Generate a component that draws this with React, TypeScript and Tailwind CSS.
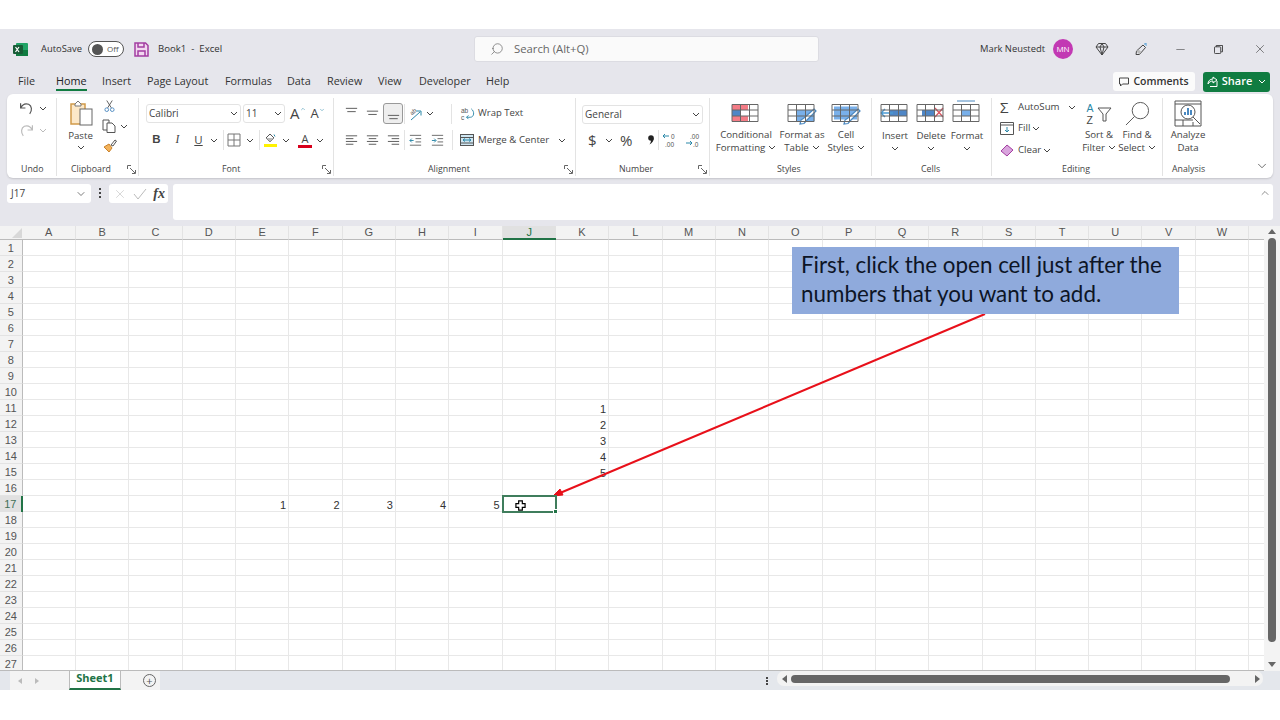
import { ChevronDown, ChevronUp, Minus, Search, X } from 'lucide-react'
import type { ReactNode } from 'react'

const columns = 'A B C D E F G H I J K L M N O P Q R S T U V W'.split(' ')
const rows = Array.from({ length: 27 }, (_, i) => i + 1)

// cell values keyed by column + row
const values: Record<string, string> = {
  K11: '1', K12: '2', K13: '3', K14: '4', K15: '5',
  E17: '1', F17: '2', G17: '3', H17: '4', I17: '5',
}

function Chev({ className = '' }: { className?: string }) {
  return (
    <svg viewBox="0 0 8 5" className={'h-[5px] w-[8px] shrink-0 ' + className} fill="none" stroke="currentColor" strokeWidth="1">
      <path d="M1 1l3 3 3-3" />
    </svg>
  )
}

function Launcher() {
  return (
    <svg viewBox="0 0 9 9" className="h-[9px] w-[9px] text-[#666]" fill="none" stroke="currentColor" strokeWidth="1">
      <path d="M.5 4V.5H4M3 3l5 5M8.500 5v3.500H5" />
    </svg>
  )
}

function Lines({ kind }: { kind: string }) {
  const paths: Record<string, string> = {
    top: 'M2 2.500h12M3.500 6h9',
    middle: 'M2 5.500h12M3.500 9h9',
    bottom: 'M2 10h12M3.500 13.500h9',
    left: 'M2 3h12M2 6h8M2 9h12M2 12h8',
    center: 'M2 3h12M4 6h8M2 9h12M4 12h8',
    right: 'M2 3h12M6 6h8M2 9h12M6 12h8',
  }
  return (
    <svg viewBox="0 0 16 16" className="h-[15px] w-[15px] text-[#555]" fill="none" stroke="currentColor" strokeWidth="1">
      <path d={paths[kind]} />
    </svg>
  )
}

function Indent({ flip }: { flip?: boolean }) {
  return (
    <svg viewBox="0 0 16 16" className="h-[15px] w-[15px]" fill="none" strokeWidth="1">
      <path d="M2 2.500h12M8 6h6M8 9.500h6M2 13h12" stroke="#666" />
      <path d={flip ? 'M2 8h4M4.500 6l2 2-2 2' : 'M6 8H2M4 6L2 8l2 2'} stroke="#2b88a8" />
    </svg>
  )
}

function Group({ width, label, labelClass = '', launcher, children }: { width: string; label: string; labelClass?: string; launcher?: boolean; children: ReactNode }) {
  return (
    <section className={'flex shrink-0 flex-col ' + width}>
      <div className="h-[60px]">{children}</div>
      <div className="relative flex h-[21px] items-center pt-[4px]">
        <span className={'text-[8.800px] text-[#444] ' + labelClass}>{label}</span>
        {launcher && (
          <span className="absolute right-[2px] top-[8px]">
            <Launcher />
          </span>
        )}
      </div>
    </section>
  )
}

function Divider() {
  return <div className="mb-[2px] mt-[1px] w-px shrink-0 bg-[#e3e3e3]" />
}

function Sep() {
  return <span className="block h-[20px] w-px shrink-0 bg-[#e3e3e3]" />
}

function TableIcon({ children }: { children: ReactNode }) {
  return (
    <svg viewBox="0 0 30 22" className="h-[22px] w-[30px] overflow-visible">
      {children}
      <path d="M1 2.500h26v17H1zM1 8h26M1 14h26M9.500 2.500v17M18.500 2.500v17" fill="none" stroke="#666" strokeWidth="1" />
    </svg>
  )
}

function Brush() {
  return <path d="M27 7l2 2-9 9-3 3.500-4 .5 1-4 3-2z" fill="#fff" stroke="#4a88c0" strokeWidth="1.200" />
}

function BigLabel({ top, bottom, width }: { top: string; bottom: string; width: string }) {
  return (
    <div className={'flex flex-col items-center text-[9.700px] leading-[13px] text-[#444] ' + width}>
      <span className="whitespace-nowrap">{top}</span>
      <span className="flex items-center gap-[3px] whitespace-nowrap">
        {bottom}
        <Chev />
      </span>
    </div>
  )
}

function TitleBar() {
  return (
    <header className="flex h-[40px] shrink-0 items-center text-[9.400px] text-[#333]">
      <svg viewBox="0 0 15 15" className="ml-[13px] h-[15px] w-[15px]">
        <rect x="3" y="1" width="12" height="13" rx="1" fill="#21a366" />
        <rect x="3" y="8" width="12" height="6" fill="#107c41" />
        <rect x="0" y="3" width="10" height="9" rx="1" fill="#185c37" />
        <path d="M2.500 5l3.500 5M6 5l-3.500 5" stroke="#fff" strokeWidth="1.200" />
      </svg>
      <span className="ml-[13px] w-[47px]">AutoSave</span>
      <span className="flex h-[16px] w-[36px] items-center rounded-full border border-[#555] bg-white pl-[3px]">
        <span className="h-[11px] w-[11px] rounded-full bg-[#555]" />
        <span className="ml-[4px] text-[8px] text-[#555]">Off</span>
      </span>
      <svg viewBox="0 0 15 15" className="ml-[10px] h-[15px] w-[15px]" fill="none" stroke="#a33ea1" strokeWidth="1.500">
        <path d="M1 1h10.500L14 3.500V14H1z" fill="#f2d9f0" />
        <path d="M4 1v4h6V1M4 14V9h7v5" />
      </svg>
      <span className="ml-[9px] w-[316px] whitespace-pre text-[9.600px]">Book1  -  Excel</span>
      <div className="flex h-[26px] w-[345px] items-center rounded-[3px] border border-[#dcdce2] bg-[#fafafa] pl-[15px] text-[#666]">
        <Search size={14} strokeWidth={1.200} className="-scale-x-100" />
        <span className="ml-[10px] text-[11.300px]">Search (Alt+Q)</span>
      </div>
      <span className="ml-[161px] w-[73px] whitespace-nowrap">Mark Neustedt</span>
      <span className="flex h-[20px] w-[20px] items-center justify-center rounded-full bg-[#c239b3] text-[8px] text-white">MN</span>
      <svg viewBox="0 0 14 14" className="ml-[22px] h-[14px] w-[14px]" fill="none" stroke="#444" strokeWidth="1">
        <path d="M3.500 1.500h7L13 5l-6 8-6-8zM1 5h12M5 5l2 8 2-8M5 5l2-3.500L9 5" />
      </svg>
      <svg viewBox="0 0 14 14" className="ml-[25px] h-[14px] w-[14px]" fill="none" stroke="#444" strokeWidth="1">
        <path d="M9 3l2.500 2.500-6 7H2l.5-3.500z" />
        <path d="M2.500 9.500l3 3 2-2.500-3-2.500z" fill="#bbb" stroke="none" />
        <path d="M11 1v2M13 3h-1.500M12.500 1l-1 1" stroke="#4a9ad4" />
      </svg>
      <Minus size={13} strokeWidth={1} className="ml-[26px] text-[#333]" />
      <svg viewBox="0 0 10 10" className="ml-[27px] h-[9px] w-[9px]" fill="none" stroke="#333" strokeWidth="1">
        <rect x=".5" y="2" width="7" height="7.500" rx="1" />
        <path d="M2.500 2V.5h7v7H8" />
      </svg>
      <X size={14} strokeWidth={1} className="ml-[30px] text-[#333]" />
    </header>
  )
}

function TabRow() {
  return (
    <nav className="flex h-[25px] shrink-0 items-center pl-[18px] pr-[10px] text-[10.800px] text-[#333]">
      <span className="w-[38px]">File</span>
      <span className="relative w-[46px] font-medium text-[#222]">
        Home
        <span className="absolute left-0 top-[16px] h-[2px] w-[31px] bg-[#107c41]" />
      </span>
      <span className="w-[45px]">Insert</span>
      <span className="w-[78px]">Page Layout</span>
      <span className="w-[62px]">Formulas</span>
      <span className="w-[40px]">Data</span>
      <span className="w-[51px]">Review</span>
      <span className="w-[41px]">View</span>
      <span className="w-[67px]">Developer</span>
      <span>Help</span>
      <span className="ml-auto flex h-[19px] w-[82px] items-center justify-center gap-[4px] rounded-[3px] bg-[#fbfbfb] text-[10.500px] font-semibold">
        <svg viewBox="0 0 10 10" className="h-[10px] w-[10px]" fill="none" stroke="#444" strokeWidth="1">
          <path d="M.5 1h9v6H3.500L1.500 9V7h-1z" />
        </svg>
        Comments
      </span>
      <span className="ml-[8px] flex h-[20px] w-[67px] items-center justify-center gap-[4px] rounded-[3px] bg-[#107c41] text-[11px] font-semibold text-white">
        <svg viewBox="0 0 11 11" className="h-[11px] w-[11px]" fill="none" stroke="#fff" strokeWidth="1">
          <path d="M3 10.500h7V5M1 8c0-3 2-5 5-5V1l4 3-4 3V5C4 5 2 6 1 8z" />
        </svg>
        Share
        <Chev className="ml-[2px]" />
      </span>
    </nav>
  )
}

function Ribbon() {
  return (
    <div className="mx-[7px] flex h-[84px] shrink-0 rounded-[6px] bg-white pt-[3px] text-[#444] shadow-[0_1px_2px_rgba(0,0,0,0.15)]">
      <Group width="w-[49px]" label="Undo" labelClass="ml-[14px]">
        <div className="flex h-[22px] items-center gap-[5px] pl-[12px]">
          <svg viewBox="0 0 14 14" className="h-[15px] w-[15px]" fill="none" stroke="#555" strokeWidth="1.100">
            <path d="M1.500 2v4.500H6M1.500 6.500C3 3.500 6 2 9 3c3 1.500 3.500 6 1 9" />
          </svg>
          <Chev />
        </div>
        <div className="flex h-[22px] items-center gap-[5px] pl-[12px] text-[#bbb]">
          <svg viewBox="0 0 14 14" className="h-[15px] w-[15px]" fill="none" stroke="#bbb" strokeWidth="1.100">
            <path d="M12.500 2v4.500H8M12.500 6.500C11 3.500 8 2 5 3c-3 1.500-3.500 6-1 9" />
          </svg>
          <Chev />
        </div>
      </Group>
      <Divider />
      <Group width="w-[81px]" label="Clipboard" labelClass="ml-[14px]" launcher>
        <div className="flex">
          <div className="ml-[10px] flex w-[27px] flex-col items-center text-[9.700px] leading-[13px]">
            <svg viewBox="0 0 24 28" className="mt-[2px] h-[28px] w-[24px]" fill="none">
              <path d="M2 5h14v20H2z" fill="#fce8c8" stroke="#d19b4a" strokeWidth="1.500" />
              <path d="M6 5l3-3 3 3v2H6z" fill="#fff" stroke="#777" />
              <rect x="11" y="10" width="12" height="16" fill="#fff" stroke="#666" />
            </svg>
            <span className="mt-[2px]">Paste</span>
            <Chev className="mt-[3px]" />
          </div>
          <div className="ml-[8px] flex flex-col items-start">
            <svg viewBox="0 0 12 14" className="ml-[2px] mt-[2px] h-[14px] w-[11px]" fill="none" stroke="#555">
              <path d="M3 1l5 8M9 1L4 9" />
              <circle cx="3" cy="11" r="2" stroke="#4a88c0" />
              <circle cx="9" cy="11" r="2" stroke="#4a88c0" />
            </svg>
            <div className="mt-[6px] flex items-center gap-[4px]">
              <svg viewBox="0 0 14 14" className="h-[14px] w-[14px]" fill="none" stroke="#555">
                <path d="M1 1h6v10H1z" />
                <path d="M5 4h5l3 3v6.500H5z" fill="#fff" />
              </svg>
              <Chev />
            </div>
            <svg viewBox="0 0 14 14" className="ml-[1px] mt-[6px] h-[14px] w-[14px]" fill="none">
              <path d="M1 8l5-3 3 4-3 4z" fill="#f3b35c" stroke="#c9822c" />
              <path d="M8 6l4-5 1.500 1-3.500 5z" stroke="#555" />
            </svg>
          </div>
        </div>
      </Group>
      <Divider />
      <Group width="w-[194px]" label="Font" labelClass="ml-[83px]" launcher>
        <div className="flex items-center pl-[7px] pt-[7px]">
          <span className="flex h-[19px] w-[95px] items-center justify-between rounded-[3px] border border-[#e3e3e3] px-[2px] text-[10px]">
            Calibri
            <Chev />
          </span>
          <span className="ml-[2px] flex h-[19px] w-[42px] items-center justify-between rounded-[3px] border border-[#e3e3e3] px-[2px] text-[10px]">
            11
            <Chev />
          </span>
          <span className="ml-[5px] flex items-start text-[15px] leading-none">
            A<ChevronUp size={6} strokeWidth={2} className="text-[#2b88a8]" />
          </span>
          <span className="ml-[5px] flex items-start text-[13px] leading-none">
            A<ChevronDown size={6} strokeWidth={2} className="text-[#2b88a8]" />
          </span>
        </div>
        <div className="mt-[8px] flex h-[18px] items-center pl-[7px] text-[11.500px]">
          <b className="w-[21px] text-center font-['Liberation_Sans',sans-serif] font-bold">B</b>
          <i className="w-[21px] text-center font-['Liberation_Serif',serif]">I</i>
          <u className="w-[21px] text-center">U</u>
          <Chev className="ml-[1px]" />
          <span className="ml-[5px]">
            <Sep />
          </span>
          <svg viewBox="0 0 14 14" className="ml-[3px] h-[14px] w-[14px]" fill="none" stroke="#777">
            <path d="M1 1h12v12H1zM7 1v12M1 7h12" />
          </svg>
          <Chev className="ml-[5px]" />
          <span className="ml-[5px]">
            <Sep />
          </span>
          <span className="ml-[3px] flex w-[14px] flex-col items-center">
            <svg viewBox="0 0 12 10" className="h-[10px] w-[12px]" fill="none" stroke="#555">
              <path d="M6 1l4 4-4 4-4-4z" />
              <path d="M2 5h8l-4 4z" fill="#bbb" stroke="none" />
              <path d="M10 1.500l1 2" stroke="#2b88a8" />
            </svg>
            <span className="mt-[1px] h-[3px] w-[13px] bg-[#fff200]" />
          </span>
          <Chev className="ml-[5px]" />
          <span className="ml-[8px] flex w-[14px] flex-col items-center text-[11px] leading-[11px]">
            A
            <span className="mt-[1px] h-[3px] w-[14px] bg-[#d8001c]" />
          </span>
          <Chev className="ml-[4px]" />
        </div>
      </Group>
      <Divider />
      <Group width="w-[241px]" label="Alignment" labelClass="ml-[94px]" launcher>
        <div className="flex h-[27px] items-center pl-[7px] pt-[6px]">
          <span className="flex w-[21px] justify-center"><Lines kind="top" /></span>
          <span className="flex w-[21px] justify-center"><Lines kind="middle" /></span>
          <span className="flex h-[21px] w-[20px] items-center justify-center rounded-[3px] border border-[#999] bg-[#eee]"><Lines kind="bottom" /></span>
          <span className="ml-[1px]"><Sep /></span>
          <svg viewBox="0 0 14 14" className="ml-[3px] h-[14px] w-[14px] overflow-visible" fill="none">
            <text x="2" y="7" fontSize="6" fill="#555" fontFamily="Liberation Sans" transform="rotate(-40 5 5)">ab</text>
            <path d="M3 13l9-8M8.500 4H13v4.500" stroke="#2b88a8" />
          </svg>
          <Chev className="ml-[4px]" />
          <span className="ml-[17px]"><Sep /></span>
          <svg viewBox="0 0 16 16" className="ml-[8px] h-[15px] w-[15px] overflow-visible" fill="none">
            <text x="1" y="7" fontSize="7" fill="#555" fontFamily="Liberation Sans">ab</text>
            <text x="1" y="15" fontSize="7" fill="#555" fontFamily="Liberation Sans">c</text>
            <path d="M12 3c4 3 3 9-1 9H7M9 10l-2 2 2 2" stroke="#2b88a8" />
          </svg>
          <span className="ml-[3px] text-[9.500px]">Wrap Text</span>
        </div>
        <div className="flex h-[27px] items-center pl-[7px] pt-[5px]">
          <span className="flex w-[21px] justify-center"><Lines kind="left" /></span>
          <span className="flex w-[21px] justify-center"><Lines kind="center" /></span>
          <span className="flex w-[20px] justify-center"><Lines kind="right" /></span>
          <span className="ml-[1px]"><Sep /></span>
          <span className="ml-[3px]"><Indent /></span>
          <span className="ml-[7px]"><Indent flip /></span>
          <span className="ml-[7px]"><Sep /></span>
          <svg viewBox="0 0 14 14" className="ml-[7px] h-[14px] w-[14px]" fill="none">
            <rect x=".5" y="1.500" width="13" height="11" fill="#cfe6f2" stroke="#555" />
            <path d="M.5 4.500h13M.5 10h13" stroke="#555" />
            <path d="M3 7h8M3 7l2-1.500M3 7l2 1.500M11 7L9 5.500M11 7L9 8.500" stroke="#2b88a8" />
          </svg>
          <span className="ml-[4px] w-[80px] whitespace-nowrap text-[9.700px]">Merge &amp; Center</span>
          <Chev />
        </div>
      </Group>
      <Divider />
      <Group width="w-[133px]" label="Number" labelClass="ml-[43px]" launcher>
        <div className="pl-[6px] pt-[8px]">
          <span className="flex h-[19px] w-[121px] items-center justify-between rounded-[3px] border border-[#e3e3e3] px-[2px] text-[10px]">
            General
            <Chev />
          </span>
        </div>
        <div className="mt-[6px] flex h-[20px] items-center pl-[12px]">
          <span className="w-[12px] text-[15px]">$</span>
          <Chev className="ml-[5px]" />
          <span className="ml-[7px] w-[22px] text-[15px]">%</span>
          <svg viewBox="0 0 8 10" className="ml-[5px] h-[10px] w-[8px]" fill="#222">
            <circle cx="4" cy="3" r="2.800" />
            <path d="M6.800 3c0 3-1.500 5-4.300 6.500C4 7 4 6 4 5z" />
          </svg>
          <span className="ml-[3px]"><Sep /></span>
          <svg viewBox="0 0 16 14" className="ml-[3px] h-[14px] w-[16px] overflow-visible" fill="none">
            <text x="9" y="6" fontSize="6.500" fill="#555" fontFamily="Liberation Sans">0</text>
            <text x="3" y="13.500" fontSize="6.500" fill="#555" fontFamily="Liberation Sans">.00</text>
            <path d="M1 3h6M1 3l2-2M1 3l2 2" stroke="#2b88a8" />
          </svg>
          <svg viewBox="0 0 16 14" className="ml-[6px] h-[14px] w-[16px] overflow-visible" fill="none">
            <text x="6" y="6" fontSize="6.500" fill="#555" fontFamily="Liberation Sans">.00</text>
            <text x="9" y="13.500" fontSize="6.500" fill="#555" fontFamily="Liberation Sans">.0</text>
            <path d="M2 10h6M8 10L6 8M8 10l-2 2" stroke="#2b88a8" />
          </svg>
        </div>
      </Group>
      <Divider />
      <Group width="w-[161px]" label="Styles" labelClass="ml-[67px]">
        <div className="flex pl-[5px] pt-[5px]">
          <div className="flex w-[62px] flex-col items-center">
            <TableIcon>
              <rect x="1" y="2.500" width="16" height="5.500" fill="#f47c86" />
              <rect x="1" y="14" width="16" height="5.500" fill="#f47c86" />
              <rect x="9.500" y="8" width="8" height="6" fill="#fff" />
              <rect x="1" y="8" width="8.500" height="6" fill="#4e86c6" />
            </TableIcon>
            <span className="h-[4px]" />
            <BigLabel top="Conditional" bottom="Formatting" width="w-[62px]" />
          </div>
          <div className="flex w-[50px] flex-col items-center">
            <TableIcon>
              <rect x="9.500" y="8" width="18" height="11.500" fill="#79b0ea" />
              <Brush />
            </TableIcon>
            <span className="h-[4px]" />
            <BigLabel top="Format as" bottom="Table" width="w-[50px]" />
          </div>
          <div className="ml-[-1px] flex w-[40px] flex-col items-center">
            <TableIcon>
              <rect x="3" y="4.500" width="23" height="13" fill="#79b0ea" />
              <Brush />
            </TableIcon>
            <span className="h-[4px]" />
            <BigLabel top="Cell" bottom="Styles" width="w-[40px]" />
          </div>
        </div>
      </Group>
      <Divider />
      <Group width="w-[119px]" label="Cells" labelClass="ml-[49px]">
        <div className="flex pl-[5px] pt-[5px]">
          {[
            { label: 'Insert', icon: <><rect x="10" y="8" width="17" height="6" fill="#4e86c6" /><path d="M1 11h12M1 11l4-4M1 11l4 4" fill="none" stroke="#4a9ad4" strokeWidth="1.400" /></> },
            { label: 'Delete', icon: <><rect x="6" y="8" width="12" height="6" fill="#4e86c6" /><path d="M19 6l8 9M27 6l-8 9" stroke="#d9525e" strokeWidth="1.200" /></> },
            { label: 'Format', icon: <><rect x="9.500" y="8" width="9" height="6" fill="#79b0ea" /><path d="M5 -1h18" stroke="#4a88c0" /></> },
          ].map((c) => (
            <div key={c.label} className="flex w-[36px] flex-col items-center text-[9.700px] leading-[13px]">
              <TableIcon>{c.icon}</TableIcon>
              <span className="mt-[5px]">{c.label}</span>
              <Chev className="mt-[4px]" />
            </div>
          ))}
        </div>
      </Group>
      <Divider />
      <Group width="w-[170px]" label="Editing" labelClass="ml-[70px]">
        <div className="flex pl-[8px]">
          <div className="w-[79px] text-[9.700px]">
            <div className="flex h-[21px] items-center">
              <span className="w-[18px] text-[15px] leading-none">Σ</span>
              <span>AutoSum</span>
              <Chev className="ml-[8px]" />
            </div>
            <div className="flex h-[21px] items-center">
              <svg viewBox="0 0 14 13" className="mr-[4px] h-[13px] w-[14px]" fill="none" stroke="#555">
                <path d="M.5 .5h13v12H.5zM.5 3h13" />
                <path d="M7 5v5M5 8l2 2 2-2" stroke="#2b88a8" />
              </svg>
              <span>Fill</span>
              <Chev className="ml-[2px]" />
            </div>
            <div className="flex h-[22px] items-center">
              <svg viewBox="0 0 14 13" className="mr-[4px] h-[13px] w-[14px]" fill="none">
                <path d="M1 7l6-6 6 5-6 6z" fill="#d9a5dd" stroke="#a33ea1" />
              </svg>
              <span>Clear</span>
              <Chev className="ml-[2px]" />
            </div>
          </div>
          <div className="flex w-[40px] flex-col items-center pt-[4px]">
            <span className="flex h-[25px] items-center">
              <span className="flex w-[10px] flex-col font-['Liberation_Sans',sans-serif] text-[10.500px] leading-[12px]">
                <span className="text-[#2b88a8]">A</span>
                <span>Z</span>
              </span>
              <svg viewBox="0 0 15 16" className="h-[16px] w-[15px]" fill="none" stroke="#555">
                <path d="M1 2h13L9 8v7H6V8z" />
              </svg>
            </span>
            <span className="h-[2px]" />
            <BigLabel top="Sort &" bottom="Filter" width="w-[40px]" />
          </div>
          <div className="flex w-[36px] flex-col items-center pt-[4px]">
            <svg viewBox="0 0 26 26" className="h-[25px] w-[25px]" fill="none" stroke="#555">
              <circle cx="16" cy="10" r="8.500" />
              <path d="M10 16L1 25" />
            </svg>
            <span className="h-[2px]" />
            <BigLabel top="Find &" bottom="Select" width="w-[36px]" />
          </div>
        </div>
      </Group>
      <Divider />
      <Group width="w-[50px]" label="Analysis" labelClass="ml-[9px]">
        <div className="flex flex-col items-center pt-[3px] text-[9.700px] leading-[13px]">
          <svg viewBox="0 0 28 27" className="h-[27px] w-[28px]" fill="none" stroke="#555">
            <path d="M1 1h26v25H1zM1 4h26M1 20h18M9 20v6M19 26v-4" />
            <circle cx="14" cy="12" r="7" fill="#fff" />
            <path d="M11 15v-3M14 15V8M17 15v-5" stroke="#4a88c0" strokeWidth="2" />
            <path d="M19 17l7 7" />
          </svg>
          <span className="mt-[1px]">Analyze</span>
          <span>Data</span>
        </div>
      </Group>
      <div className="relative flex-1">
        <ChevronDown size={14} strokeWidth={1.200} className="absolute bottom-[5px] right-[4px] text-[#333]" />
      </div>
    </div>
  )
}

function FormulaBar() {
  return (
    <div className="flex h-[48px] shrink-0 px-[7px] pt-[6px] text-[#444]">
      <div className="flex h-[19px] w-[84px] items-center justify-between rounded-[3px] bg-white px-[4px] text-[10px]">
        J17
        <ChevronDown size={12} strokeWidth={1.400} />
      </div>
      <div className="flex w-[18px] items-start justify-center pt-[4px]">
        <span className="flex flex-col gap-[2px]">
          <span className="h-[2px] w-[2px] bg-[#444]" />
          <span className="h-[2px] w-[2px] bg-[#444]" />
          <span className="h-[2px] w-[2px] bg-[#444]" />
        </span>
      </div>
      <div className="flex h-[19px] w-[59px] items-center justify-between rounded-[3px] bg-white pl-[4px] pr-[3px]">
        <X size={14} strokeWidth={1} className="text-[#bbb]" />
        <svg viewBox="0 0 14 14" className="h-[14px] w-[14px]" fill="none" stroke="#bbb"><path d="M1 7l4 5 8-10" /></svg>
        <span className="font-['Liberation_Serif',serif] text-[14px] font-bold italic leading-none">fx</span>
      </div>
      <div className="relative ml-[5px] h-[36px] flex-1 rounded-[3px] bg-white">
        <ChevronUp size={12} strokeWidth={1.200} className="absolute right-[2px] top-[3px]" />
      </div>
    </div>
  )
}

function Sheet() {
  return (
    <div className="flex min-h-0 flex-1 bg-[#f3f3f3]">
      <div className="grid h-[445px] flex-1 grid-cols-[22.600px_repeat(23,53.340px)_1fr] grid-rows-[14px_repeat(27,16px)] overflow-hidden border-b border-[#bbb] bg-white font-['Liberation_Sans',sans-serif] text-[11px] text-[#333]">
        <div className="relative border-b border-[#bbb] bg-[#f3f3f3]">
          <span className="absolute bottom-[1px] right-[1px] h-0 w-0 border-b-[10px] border-l-[10px] border-b-[#d8d8d8] border-l-transparent" />
        </div>
        {columns.map((c) =>
          c === 'J' ? (
            <div key={c} className="flex items-center justify-center border-b-2 border-[#217346] bg-[#e1e1e1] text-[#217346]">{c}</div>
          ) : (
            <div key={c} className="flex items-center justify-center border-b border-r border-[#bbb] border-r-[#e3e3e3] bg-[#f3f3f3] text-[#555]">{c}</div>
          ),
        )}
        <div className="border-b border-[#bbb] bg-[#f3f3f3]" />
        {rows.map((r) => (
          <div key={r} className="contents">
            <div className={r === 17
              ? 'flex items-center justify-center border-r-2 border-[#217346] bg-[#e1e1e1] pt-[1px] text-[#3f6f57]'
              : 'flex items-center justify-center border-b border-r border-[#bbb] border-b-[#e3e3e3] bg-[#f3f3f3] pt-[1px] text-[#555]'}>{r}</div>
            {columns.map((c) => (
              <div key={c} className="relative flex items-center justify-end border-b border-r border-[#e8e8e8] pr-[2px] pt-[3px] leading-none">
                {values[c + r]}
                {c + r === 'J17' && (
                  <span className="absolute -left-px -top-px z-10 h-[18px] w-[55px] border-2 border-[#3f7d5c]">
                    <span className="absolute -bottom-[3px] -right-[3px] h-[5px] w-[5px] border border-white bg-[#217346]" />
                    <svg viewBox="0 0 12 12" className="absolute left-[11px] top-[3px] h-[11px] w-[11px]">
                      <path d="M4 1h4v3h3v4H8v3H4V8H1V4h3z" fill="#fff" stroke="#000" strokeWidth="1.300" />
                    </svg>
                  </span>
                )}
              </div>
            ))}
            <div className="border-b border-[#e8e8e8]" />
          </div>
        ))}
      </div>
      <div className="flex w-[16px] shrink-0 flex-col items-center bg-[#f3f3f3] pt-[3px]">
        <span className="h-0 w-0 border-x-[4px] border-b-[5px] border-x-transparent border-b-[#666]" />
        <span className="mt-[4px] h-[404px] w-[8px] rounded-full bg-[#666]" />
        <span className="mt-[20px] h-0 w-0 border-x-[4px] border-t-[5px] border-x-transparent border-t-[#666]" />
      </div>
    </div>
  )
}

function SheetTabs() {
  return (
    <footer className="flex h-[19px] shrink-0 bg-[#e4e7ec] font-['Open_Sans',sans-serif]">
      <div className="ml-[10px] flex w-[59px] items-center gap-[13px] bg-[#f3f3f3] pl-[8px]">
        <span className="h-0 w-0 border-y-[3px] border-r-[4px] border-y-transparent border-r-[#bbb]" />
        <span className="h-0 w-0 border-y-[3px] border-l-[4px] border-y-transparent border-l-[#bbb]" />
      </div>
      <div className="flex h-[19px] w-[52px] items-center justify-center border-x border-b-2 border-[#bbb] border-b-[#217346] bg-white pb-[3px] text-[11px] font-bold text-[#217346]">Sheet1</div>
      <div className="flex w-[39px] items-center bg-[#f3f3f3] pl-[22px]">
        <span className="flex h-[13px] w-[13px] items-center justify-center rounded-full border border-[#666] text-[11px] leading-none text-[#555]">+</span>
      </div>
      <span className="ml-[606px] flex flex-col justify-center gap-[1px]">
        <span className="h-[2px] w-[2px] bg-[#444]" />
        <span className="h-[2px] w-[2px] bg-[#444]" />
        <span className="h-[2px] w-[2px] bg-[#444]" />
      </span>
      <div className="ml-[9px] flex h-[15px] w-[486px] items-center rounded-[7px] bg-[#f3f3f3] pl-[5px]">
        <span className="h-0 w-0 border-y-[4px] border-r-[5px] border-y-transparent border-r-[#666]" />
        <span className="ml-[4px] h-[8px] w-[439px] rounded-full bg-[#666]" />
        <span className="ml-[25px] h-0 w-0 border-y-[4px] border-l-[5px] border-y-transparent border-l-[#666]" />
      </div>
    </footer>
  )
}

export default function App() {
  return (
    <div className="relative h-[720px] w-[1280px] overflow-hidden bg-white pt-[29px] font-['Open_Sans',sans-serif]">
      <div className="flex h-[661px] flex-col bg-[#e6e6ec]">
        <TitleBar />
        <TabRow />
        <Ribbon />
        <FormulaBar />
        <Sheet />
        <SheetTabs />
      </div>

      {/* callout laid over the sheet */}
      <svg viewBox="0 0 1280 720" className="pointer-events-none absolute inset-0 h-[720px] w-[1280px]">
        <path d="M985 314L560 493" stroke="#e8101a" strokeWidth="2" />
        <path d="M553 496l10-1-3-6z" fill="#e8101a" stroke="#e8101a" />
      </svg>
      <div className="absolute left-[792px] top-[247px] h-[67px] w-[387px] bg-[#8faadc] pl-[9px] pt-[3px] font-['Lato',sans-serif] text-[22.400px] leading-[29px] text-[#0d1526]">
        First, click the open cell just after the
        <br />
        numbers that you want to add.
      </div>
    </div>
  )
}
